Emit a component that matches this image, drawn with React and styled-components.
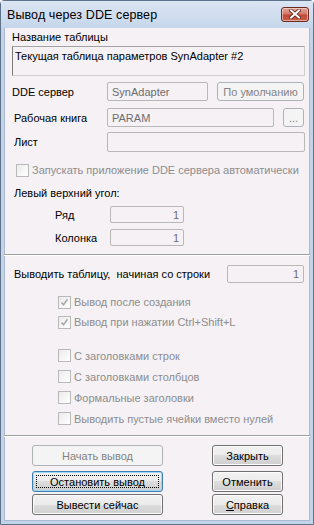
import styled, { createGlobalStyle } from "styled-components";

const Global = createGlobalStyle`
  html, body { margin: 0; padding: 0; background: #ffffff; }
  body { font-family: "Liberation Sans", Arial, sans-serif; }
`;

const Window = styled.div`
  width: 314px;
  height: 525px;
  box-sizing: border-box;
  border: 1px solid #5f7089;
  border-radius: 4px 4px 0 0;
  background: #c3d4ea;
  display: flex;
  flex-direction: column;
  padding: 0 3px 3px;
`;

const TitleBar = styled.div`
  height: 27px;
  flex: none;
  display: flex;
  align-items: center;
  justify-content: space-between;
  background: linear-gradient(#dae5f3, #c6d6eb);
  margin: 0 -3px;
  padding: 0 4px 0 6px;
`;

const Title = styled.div`
  font-size: 12.5px;
  color: #000;
  letter-spacing: 0.1px;
  padding-top: 1px;
`;

const CloseBtn = styled.div`
  width: 28px;
  height: 15px;
  box-sizing: border-box;
  border: 1px solid #6b2a1f;
  border-radius: 3px;
  background: linear-gradient(#e4a89c 0%, #d4786a 45%, #c04a35 55%, #c8604a 100%);
  box-shadow: inset 0 0 0 1px rgba(255, 220, 210, 0.6);
  display: flex;
  align-items: center;
  justify-content: center;
  margin-top: -1px;
`;

const Client = styled.div`
  flex: 1;
  background: #f5f1f5;
  box-shadow: inset 1px 0 0 #a8bbd2, inset -1px 0 0 #a8bbd2, inset 0 -1px 0 #a8bbd2;
  display: flex;
  flex-direction: column;
  font-size: 11px;
  color: #000;
`;

const Label = styled.div`
  height: 14px;
  line-height: 14px;
  white-space: nowrap;
  color: ${(p) => (p.$disabled ? "#8d8d8d" : "#000")};
  width: ${(p) => (p.$w ? `${p.$w}px` : "auto")};
  flex: none;
`;

const Block = styled.div`
  margin-top: ${(p) => p.$mt || 0}px;
  padding-left: ${(p) => p.$pl || 0}px;
`;

const NameBox = styled.div`
  margin: 2px 0 0 8px;
  width: 293px;
  height: 30px;
  box-sizing: border-box;
  border-style: solid;
  border-width: 1px;
  border-color: #a3a3a3 #cfcfcf #cfcfcf #7d7d7d;
  padding: 2px 0 0 2px;
  line-height: 14px;
  white-space: nowrap;
`;

const Row = styled.div`
  display: flex;
  align-items: center;
  height: ${(p) => p.$h}px;
  margin-top: ${(p) => p.$mt}px;
  padding-left: ${(p) => p.$pl}px;
`;

const Field = styled.div`
  width: ${(p) => p.$w}px;
  height: 100%;
  box-sizing: border-box;
  border: 1px solid #b8b8b8;
  border-radius: 2px;
  background: #f5f1f5;
  color: #6d6d6d;
  display: flex;
  align-items: center;
  justify-content: ${(p) => (p.$right ? "flex-end" : "flex-start")};
  padding: 0 4px;
  white-space: nowrap;
  flex: none;
`;

const Button = styled.div`
  width: ${(p) => p.$w}px;
  height: ${(p) => p.$h || 21}px;
  box-sizing: border-box;
  margin-left: ${(p) => p.$ml || 0}px;
  flex: none;
  border: 1px solid ${(p) => (p.$disabled ? "#adb2b5" : p.$focus ? "#3c7fb1" : "#707070")};
  border-radius: 3px;
  background: ${(p) =>
    p.$disabled
      ? "#f4f4f4"
      : "linear-gradient(#f2f2f2 0%, #ebebeb 50%, #dddddd 50%, #cfcfcf 100%)"};
  box-shadow: ${(p) =>
    p.$disabled ? "none" : p.$focus ? "inset 0 0 0 1px #9fd8f4" : "inset 0 0 0 1px #fbfbfb"};
  color: ${(p) => (p.$disabled ? "#838383" : "#000")};
  display: flex;
  align-items: center;
  justify-content: center;
  white-space: nowrap;
  position: relative;
  line-height: 14px;
`;

const FocusRing = styled.span`
  position: absolute;
  inset: 3px;
  border: 1px dotted #000;
`;

const CheckRow = styled.div`
  display: flex;
  align-items: center;
  height: ${(p) => p.$h || 20}px;
  padding-left: ${(p) => p.$pl}px;
  color: #8d8d8d;
  white-space: nowrap;
`;

const Box = styled.div`
  width: 13px;
  height: 13px;
  box-sizing: border-box;
  border: 1px solid #b9b9b9;
  background: linear-gradient(135deg, #ebebeb, #ffffff);
  margin-right: 3px;
  flex: none;
  display: flex;
  align-items: center;
  justify-content: center;
`;

const Separator = styled.div`
  margin-top: ${(p) => p.$mt}px;
  height: 1px;
  background: #a0a0a0;
  border-bottom: 1px solid #ffffff;
  flex: none;
`;

const ButtonGrid = styled.div`
  display: grid;
  grid-template-columns: 131px 71px;
  column-gap: 49px;
  padding-left: 28px;
  margin-top: ${(p) => p.$mt}px;
`;

const Underline = styled.span`
  text-decoration: underline;
`;

const Check = ({ checked }) => (
  <Box>
    {checked && (
      <svg width="9" height="9" viewBox="0 0 9 9">
        <path d="M1.5 4.5 L3.5 6.8 L7.5 1.2" fill="none" stroke="#a9a9a9" strokeWidth="1.6" />
      </svg>
    )}
  </Box>
);

const CloseIcon = () => (
  <svg width="12" height="10" viewBox="0 0 12 10">
    <path d="M2 1.5 L10 8.5 M10 1.5 L2 8.5" stroke="#5a241b" strokeWidth="3.6" strokeLinecap="square" />
    <path d="M2 1.5 L10 8.5 M10 1.5 L2 8.5" stroke="#ffffff" strokeWidth="2" strokeLinecap="square" />
  </svg>
);

export default function App() {
  return (
    <>
      <Global />
      <Window>
        <TitleBar>
          <Title>Вывод через DDE сервер</Title>
          <CloseBtn>
            <CloseIcon />
          </CloseBtn>
        </TitleBar>
        <Client>
          <Block $mt={2} $pl={8}>
            <Label>Название таблицы</Label>
          </Block>
          <NameBox>Текущая таблица параметров SynAdapter #2</NameBox>

          <Row $h={19} $mt={6} $pl={8}>
            <Label $w={95}>DDE сервер</Label>
            <Field $w={101}>SynAdapter</Field>
            <Button $w={87} $h={19} $ml={9} $disabled>
              По умолчанию
            </Button>
          </Row>
          <Row $h={19} $mt={7} $pl={10}>
            <Label $w={93}>Рабочая книга</Label>
            <Field $w={167}>PARAM</Field>
            <Button $w={21} $h={19} $ml={9} $disabled>
              ...
            </Button>
          </Row>
          <Row $h={20} $mt={5} $pl={10}>
            <Label $w={93}>Лист</Label>
            <Field $w={198} />
          </Row>

          <Block $mt={11}>
            <CheckRow $h={14} $pl={12}>
              <Check />
              Запускать приложение DDE сервера автоматически
            </CheckRow>
          </Block>
          <Block $mt={9} $pl={10}>
            <Label>Левый верхний угол:</Label>
          </Block>
          <Row $h={17} $mt={6} $pl={51}>
            <Label $w={55}>Ряд</Label>
            <Field $w={74} $right>
              1
            </Field>
          </Row>
          <Row $h={17} $mt={6} $pl={51}>
            <Label $w={55}>Колонка</Label>
            <Field $w={74} $right>
              1
            </Field>
          </Row>

          <Separator $mt={8} />

          <Row $h={18} $mt={9} $pl={10}>
            <Label $w={213}>Выводить таблицу,&nbsp; начиная со строки</Label>
            <Field $w={77} $right>
              1
            </Field>
          </Row>

          <Block $mt={9}>
            <CheckRow $pl={54}>
              <Check checked />
              Вывод после создания
            </CheckRow>
            <CheckRow $pl={54}>
              <Check checked />
              Вывод при нажатии Ctrl+Shift+L
            </CheckRow>
          </Block>
          <Block $mt={13}>
            <CheckRow $h={21} $pl={54}>
              <Check />С заголовками строк
            </CheckRow>
            <CheckRow $h={21} $pl={54}>
              <Check />С заголовками столбцов
            </CheckRow>
            <CheckRow $h={21} $pl={54}>
              <Check />
              Формальные заголовки
            </CheckRow>
            <CheckRow $h={21} $pl={54}>
              <Check />
              Выводить пустые ячейки вместо нулей
            </CheckRow>
          </Block>

          <Separator $mt={6} />

          <ButtonGrid $mt={8}>
            <Button $w={131} $disabled>
              Начать вывод
            </Button>
            <Button $w={71}>Закрыть</Button>
          </ButtonGrid>
          <ButtonGrid $mt={5}>
            <Button $w={131} $focus>
              <FocusRing />
              Остановить вывод
            </Button>
            <Button $w={71}>Отменить</Button>
          </ButtonGrid>
          <ButtonGrid $mt={2}>
            <Button $w={131}>Вывести сейчас</Button>
            <Button $w={71}>
              <Underline>С</Underline>правка
            </Button>
          </ButtonGrid>
        </Client>
      </Window>
    </>
  );
}
